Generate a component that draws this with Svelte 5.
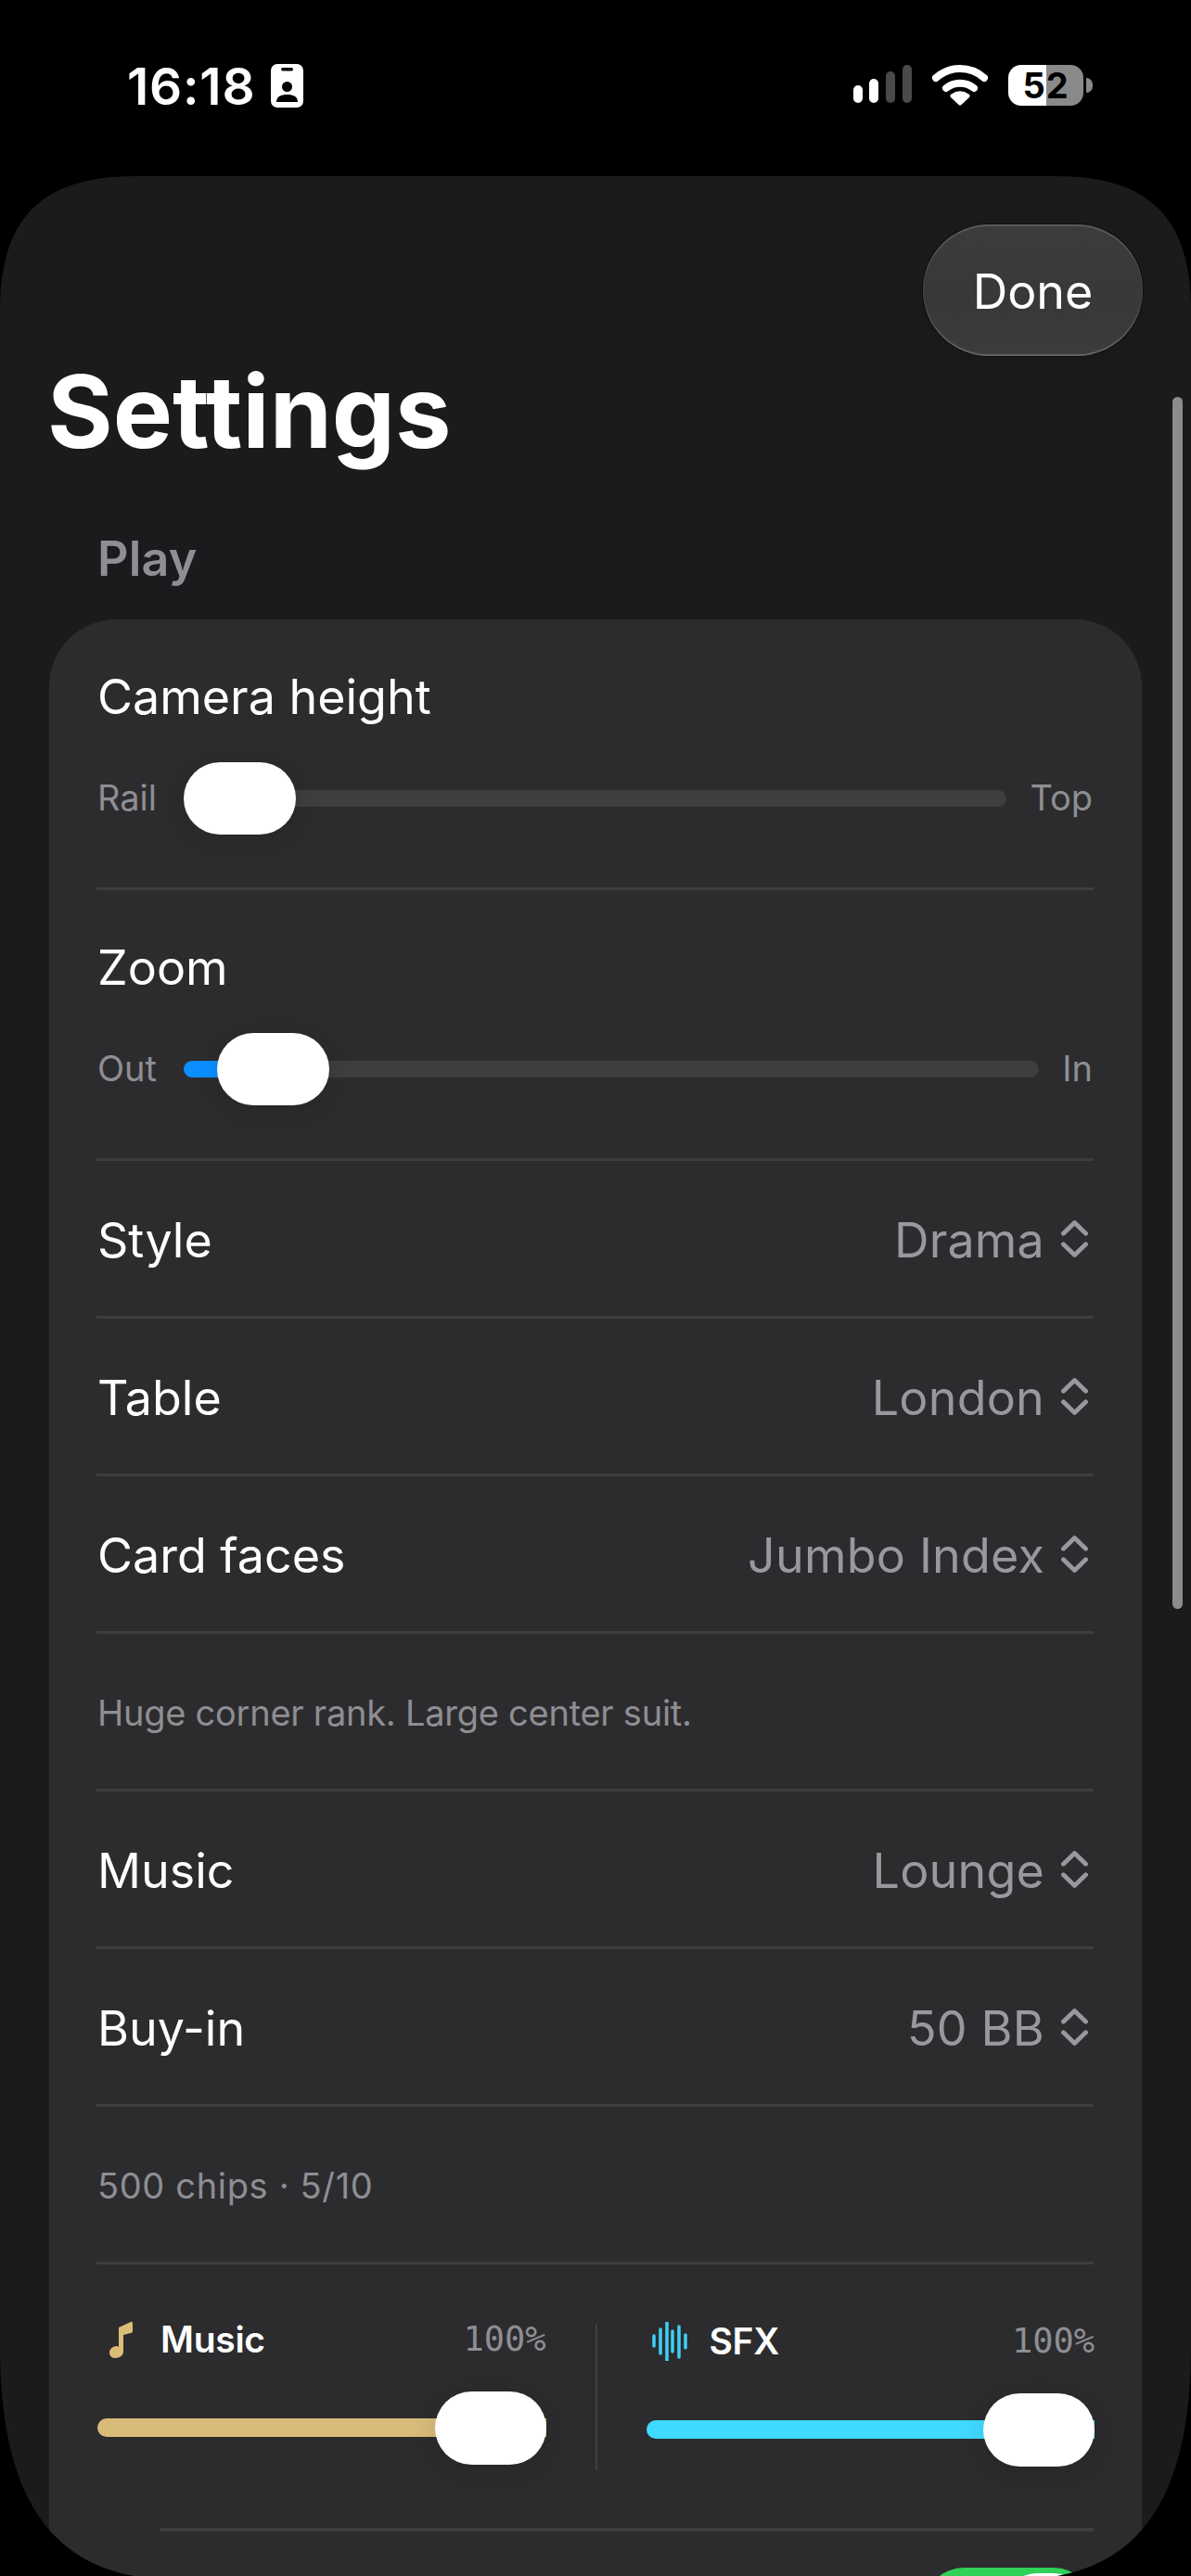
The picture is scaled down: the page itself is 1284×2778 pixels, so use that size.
<script>
  const sliders = [
    { label: 'Camera height', min: 'Rail', max: 'Top', value: 0 },
    { label: 'Zoom', min: 'Out', max: 'In', value: 4.5 }
  ];
  const topRows = [
    { label: 'Style', value: 'Drama' },
    { label: 'Table', value: 'London' },
    { label: 'Card faces', value: 'Jumbo Index', hint: 'Huge corner rank. Large center suit.', spacing: 'tight' },
    { label: 'Music', value: 'Lounge' },
    { label: 'Buy-in', value: '50 BB', hint: '500 chips · 5/10', spacing: 'loose' }
  ];
  const bars = [
    [2, 15, 11], [9, 8, 26], [16, 0, 42], [22, 10, 22], [29, 5, 33], [36, 14, 14]
  ];
</script>

{#snippet chevrons()}
  <svg class="chev" viewBox="0 0 30 42" aria-hidden="true">
    <path d="M2.5 15 L15 3 L27.500 15 M2.5 27 L15 39 L27.500 27" />
  </svg>
{/snippet}

<div class="screen">
  <header class="status">
    <div class="left">
      <span class="time">16:18</span>
      <svg class="badge" viewBox="0 0 35 47" aria-hidden="true">
        <rect width="35" height="47" rx="7" fill="#fff" />
        <rect x="11" y="4" width="13" height="3.500" rx="1.700" fill="#000" />
        <circle cx="17.500" cy="24.500" r="5.500" fill="#000" />
        <path d="M6 41 C6 35 11 33 17.500 33 C24 33 29 35 29 41 Z" fill="#000" />
      </svg>
    </div>
    <div class="right">
      <svg class="signal" viewBox="0 0 63 42" aria-hidden="true">
        <rect x="0" y="22" width="10" height="19" rx="5" fill="#fff" />
        <rect x="17" y="15" width="10" height="26" rx="5" fill="#fff" />
        <rect x="35" y="7" width="10" height="34" rx="5" fill="#4a4a4a" />
        <rect x="53" y="0" width="10" height="41" rx="5" fill="#4a4a4a" />
      </svg>
      <svg class="wifi" viewBox="0 0 60 44" aria-hidden="true">
        <path d="M4 14 A39 39 0 0 1 56 14" />
        <path d="M15 25 A24 24 0 0 1 45 25" />
        <path class="wedge" d="M30 41 L22 33.500 Q30 28 38 33.500 Z" />
      </svg>
      <div class="battery">
        <div class="cell"><span>52</span></div>
        <div class="nub"></div>
      </div>
    </div>
  </header>

  <main class="sheet">
    <div class="scrollbar"></div>
    <div class="top">
      <button class="done">Done</button>
    </div>
    <h1>Settings</h1>
    <h2>Play</h2>

    <section class="card">
      {#each sliders as s}
        <div class="row slider-row">
          <div class="name">{s.label}</div>
          <div class="slider">
            <span class="end first">{s.min}</span>
            <div class="track">
              <div class="fill" style="width: calc((100% - 121px) * {s.value / 100} + 60px); opacity: {s.value ? 1 : 0}"></div>
              <div class="thumb" style="left: calc((100% - 121px) * {s.value / 100})"></div>
            </div>
            <span class="end last">{s.max}</span>
          </div>
        </div>
      {/each}

      {#each topRows as r}
        <div class="row pick">
          <span class="name">{r.label}</span>
          <span class="value">{r.value}{@render chevrons()}</span>
        </div>
        {#if r.hint}
          <div class="row hint {r.spacing}">{r.hint}</div>
        {/if}
      {/each}

      <div class="mix">
        <div class="channel music">
          <div class="head">
            <svg class="note" viewBox="0 0 25 40" aria-hidden="true">
              <path d="M10 7 L23 1 Q25 0 25 3 L25 11 Q25 13 23 13 L15 15 L15 33 C15 38 10 40 6 40 C2 40 0 37 0 34 C0 30 4 27 8 27 Q9 27 10 28 Z" />
            </svg>
            <span class="chan-name">Music</span>
            <span class="pct">100%</span>
          </div>
          <div class="mini"><div class="mini-fill"></div><div class="thumb end-thumb"></div></div>
        </div>
        <div class="vline"></div>
        <div class="channel sfx">
          <div class="head">
            <svg class="wave" viewBox="0 0 41 42" aria-hidden="true">
              {#each bars as b}
                <line x1={b[0]} x2={b[0]} y1={b[1]} y2={b[1] + b[2]} />
              {/each}
            </svg>
            <span class="chan-name">SFX</span>
            <span class="pct">100%</span>
          </div>
          <div class="mini"><div class="mini-fill"></div><div class="thumb end-thumb"></div></div>
        </div>
      </div>

      <div class="inset-rule"></div>
      <div class="toggle-row">
        <div class="toggle"><div class="knob"></div></div>
      </div>
    </section>
  </main>
</div>

<style>
  :global(body) {
    margin: 0;
    background: #000;
  }

  .screen {
    width: 1284px;
    height: 2778px;
    display: flex;
    flex-direction: column;
    overflow: hidden;
    background: #000;
    color: #fff;
    font-family: Inter, "Noto Sans", sans-serif;
  }

  .status {
    height: 190px;
    flex: none;
    display: flex;
    justify-content: space-between;
    box-sizing: border-box;
    padding: 69px 106px 0 138px;
  }

  .left {
    display: flex;
    align-items: flex-start;
  }

  .time {
    width: 154px;
    margin-top: 1px;
    margin-left: -1px;
    padding-right: 1px;
    font-size: 55px;
    font-weight: 600;
    line-height: 47px;
    letter-spacing: .8px;
  }

  .badge {
    width: 35px;
    height: 47px;
  }

  .right {
    display: flex;
    align-items: flex-start;
    gap: 22px;
  }

  .signal {
    width: 63px;
    height: 42px;
    margin-top: 1px;
  }

  .wifi {
    width: 60px;
    height: 44px;
    margin-top: 1px;
  }

  .wifi path {
    fill: none;
    stroke: #fff;
    stroke-width: 8;
    stroke-linecap: round;
  }

  .wifi .wedge {
    fill: #fff;
    stroke-width: 5;
    stroke-linejoin: round;
  }

  .battery {
    display: flex;
    align-items: center;
    gap: 3px;
    margin-top: 1px;
  }

  .cell {
    width: 81px;
    height: 44px;
    border-radius: 14px;
    background: linear-gradient(90deg, #fff 51%, #8a8a8a 51%);
    display: flex;
    align-items: center;
    justify-content: center;
    color: #000;
    font-size: 38px;
    font-weight: 700;
    line-height: 44px;
    letter-spacing: 1px;
  }

  .nub {
    width: 7px;
    height: 16px;
    background: #8a8a8a;
    border-radius: 0 8px 8px 0;
  }

  .sheet {
    flex: 1;
    min-height: 0;
    position: relative;
    overflow: hidden;
    box-sizing: border-box;
    padding: 0 53px;
    background: #1b1b1d;
    clip-path: path('M0 145 C0 50 40 0 145 0 L1139 0 C1244 0 1284 50 1284 145 L1284 2340 C1284 2488 1239 2570 1139 2588 L145 2588 C45 2570 0 2488 0 2340 Z');
  }

  .scrollbar {
    position: absolute;
    top: 238px;
    right: 9px;
    width: 11px;
    height: 1307px;
    border-radius: 6px;
    background: #8c8c8e;
  }

  .top {
    display: flex;
    justify-content: flex-end;
    padding-top: 52px;
  }

  .done {
    width: 237px;
    height: 142px;
    border: 0;
    border-radius: 71px;
    background: linear-gradient(180deg, #3c3c3e, #38383a 60%, #3c3c3e);
    box-shadow: 0 0 0 1px #0c0c0c, inset 0 2px 1px rgba(255, 255, 255, .16), inset 0 -2px 1px rgba(255, 255, 255, .2), 0 8px 24px rgba(0, 0, 0, .1);
    color: #fff;
    font: 400 52px/60px Inter, sans-serif;
    padding: 4px 0 0;
    margin-right: -1px;
  }

  h1 {
    margin: 0 0 0 -2px;
    font-size: 108px;
    font-weight: 700;
    line-height: 120px;
  }

  h2 {
    margin: 69px 0 35px 52px;
    font-size: 52px;
    font-weight: 600;
    line-height: 60px;
    color: #8e8e93;
    letter-spacing: .2px;
  }

  .card {
    background: #2c2c2e;
    border-radius: 72px;
    padding: 0 52px 0 51px;
  }

  .row {
    box-sizing: border-box;
    padding-inline: 1px;
    border-bottom: 3px solid #3e3e41;
  }

  .name {
    font-size: 52px;
    line-height: 60px;
  }

  .slider-row {
    height: 292px;
    padding-top: 54px;
  }

  .slider {
    margin-top: 40px;
    display: flex;
    align-items: center;
    height: 78px;
    gap: 28px;
  }

  .end {
    font-size: 38px;
    line-height: 44px;
    color: #8e8e93;
    transform: translateY(-1px);
  }

  .first {
    width: 65px;
  }

  .last {
    margin-left: -3px;
  }

  .track {
    flex: 1;
    height: 18px;
    border-radius: 9px;
    background: #3e3e40;
    position: relative;
  }

  .fill {
    position: absolute;
    inset: 0 auto 0 0;
    border-radius: 9px;
    background: #0a8fff;
  }

  .thumb {
    position: absolute;
    top: -30px;
    width: 121px;
    height: 78px;
    border-radius: 39px;
    background: #fff;
    box-shadow: 0 6px 28px rgba(0, 0, 0, .12);
  }

  .pick {
    height: 170px;
    padding-top: 5px;
    display: flex;
    align-items: center;
    justify-content: space-between;
  }

  .value {
    display: flex;
    align-items: center;
    gap: 18px;
    font-size: 52px;
    line-height: 60px;
    color: #98989d;
    letter-spacing: .2px;
  }

  .chev {
    width: 29px;
    height: 42px;
    margin-right: 5px;
    margin-top: -4px;
  }

  .chev path {
    fill: none;
    stroke: #98989d;
    stroke-width: 5;
    stroke-linecap: round;
    stroke-linejoin: round;
  }

  .hint {
    height: 170px;
    padding-top: 3px;
    display: flex;
    align-items: center;
    font-size: 38px;
    color: #8e8e93;
  }

  .tight {
    letter-spacing: -.25px;
  }

  .loose {
    letter-spacing: .65px;
  }

  .mix {
    display: grid;
    grid-template-columns: 1fr 2px 1fr;
    column-gap: 53px;
    height: 284px;
    padding: 61px 0 0 1px;
    margin-right: -1px;
    box-sizing: border-box;
  }

  .head {
    display: flex;
    align-items: center;
    height: 40px;
  }

  .note {
    width: 25px;
    height: 40px;
    margin-left: 13px;
    margin-right: 30px;
    fill: #dcbd78;
  }

  .wave {
    width: 41px;
    height: 42px;
    margin-left: 6px;
    margin-right: 21px;
    stroke: #3fd0f5;
    stroke-width: 3.500;
    stroke-linecap: round;
  }

  .chan-name {
    font-size: 39px;
    font-weight: 600;
    line-height: 40px;
    letter-spacing: -.3px;
  }

  .pct {
    margin-left: auto;
    font: 400 37px/40px "DejaVu Sans Mono", monospace;
    color: #8e8e93;
  }

  .mini {
    position: relative;
    height: 79px;
    margin-top: 36px;
    display: flex;
    align-items: center;
  }

  .mini-fill {
    width: 100%;
    height: 20px;
    border-radius: 10px 0 0 10px;
    transform: translateY(-1px);
  }

  .music .mini-fill {
    background: #d8bb79;
  }

  .sfx .mini-fill {
    background: #40d9ff;
  }

  .end-thumb {
    top: 0;
    right: 0;
    width: 120px;
    height: 79px;
    border-radius: 40px;
  }

  .sfx {
    margin-top: 2px;
  }

  .vline {
    height: 156px;
    margin-top: 4px;
    background: #414144;
  }

  .inset-rule {
    height: 4px;
    margin-left: 69px;
    background: #3e3e41;
  }

  .toggle-row {
    display: flex;
    justify-content: flex-end;
    padding: 39px 1px 39px 0;
  }

  .toggle {
    width: 181px;
    height: 84px;
    border-radius: 42px;
    background: #30d158;
    position: relative;
  }

  .knob {
    position: absolute;
    top: 6px;
    right: 6px;
    width: 90px;
    height: 72px;
    border-radius: 36px;
    background: #fff;
  }
</style>
